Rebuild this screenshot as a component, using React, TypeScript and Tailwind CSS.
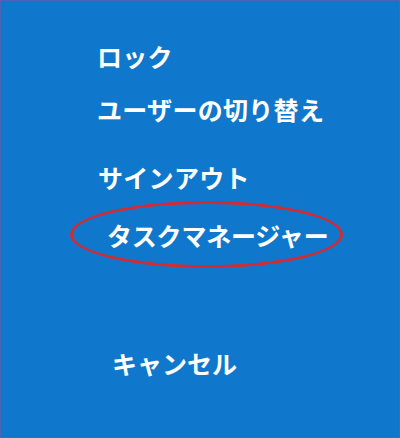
import React from "react";

const items = [
  { label: "ロック", className: "mt-[39px] pl-[96px]" },
  { label: "ユーザーの切り替え", className: "mt-[21px] pl-[96px]" },
  { label: "サインアウト", className: "mt-[36px] pl-[97px]" },
];

const App: React.FC = () => {
  return (
    <div
      className="w-[400px] h-[438px] overflow-hidden border border-[#4a66b3] bg-[#1078cc] text-white"
      style={{ fontFamily: '"Noto Sans CJK JP", "Noto Sans", sans-serif' }}
    >
      {items.map((item) => (
        <p key={item.label} className={`${item.className} h-8 text-[25px] leading-8 font-bold tracking-[0.3px]`}>
          {item.label}
        </p>
      ))}
      {/* highlighted entry */}
      <div className="relative mt-[26px] h-8 pl-[106px]">
        <p className="text-[25px] leading-8 font-bold tracking-[-0.2px]">タスクマネージャー</p>
        <div className="absolute left-[69px] top-[-18px] w-[273px] h-[67px] rounded-[50%] border-[3px] border-[#d52a30]" />
      </div>
      <p className="mt-[96px] h-8 pl-[111px] text-[25px] leading-8 font-bold">キャンセル</p>
    </div>
  );
};

export default App;
